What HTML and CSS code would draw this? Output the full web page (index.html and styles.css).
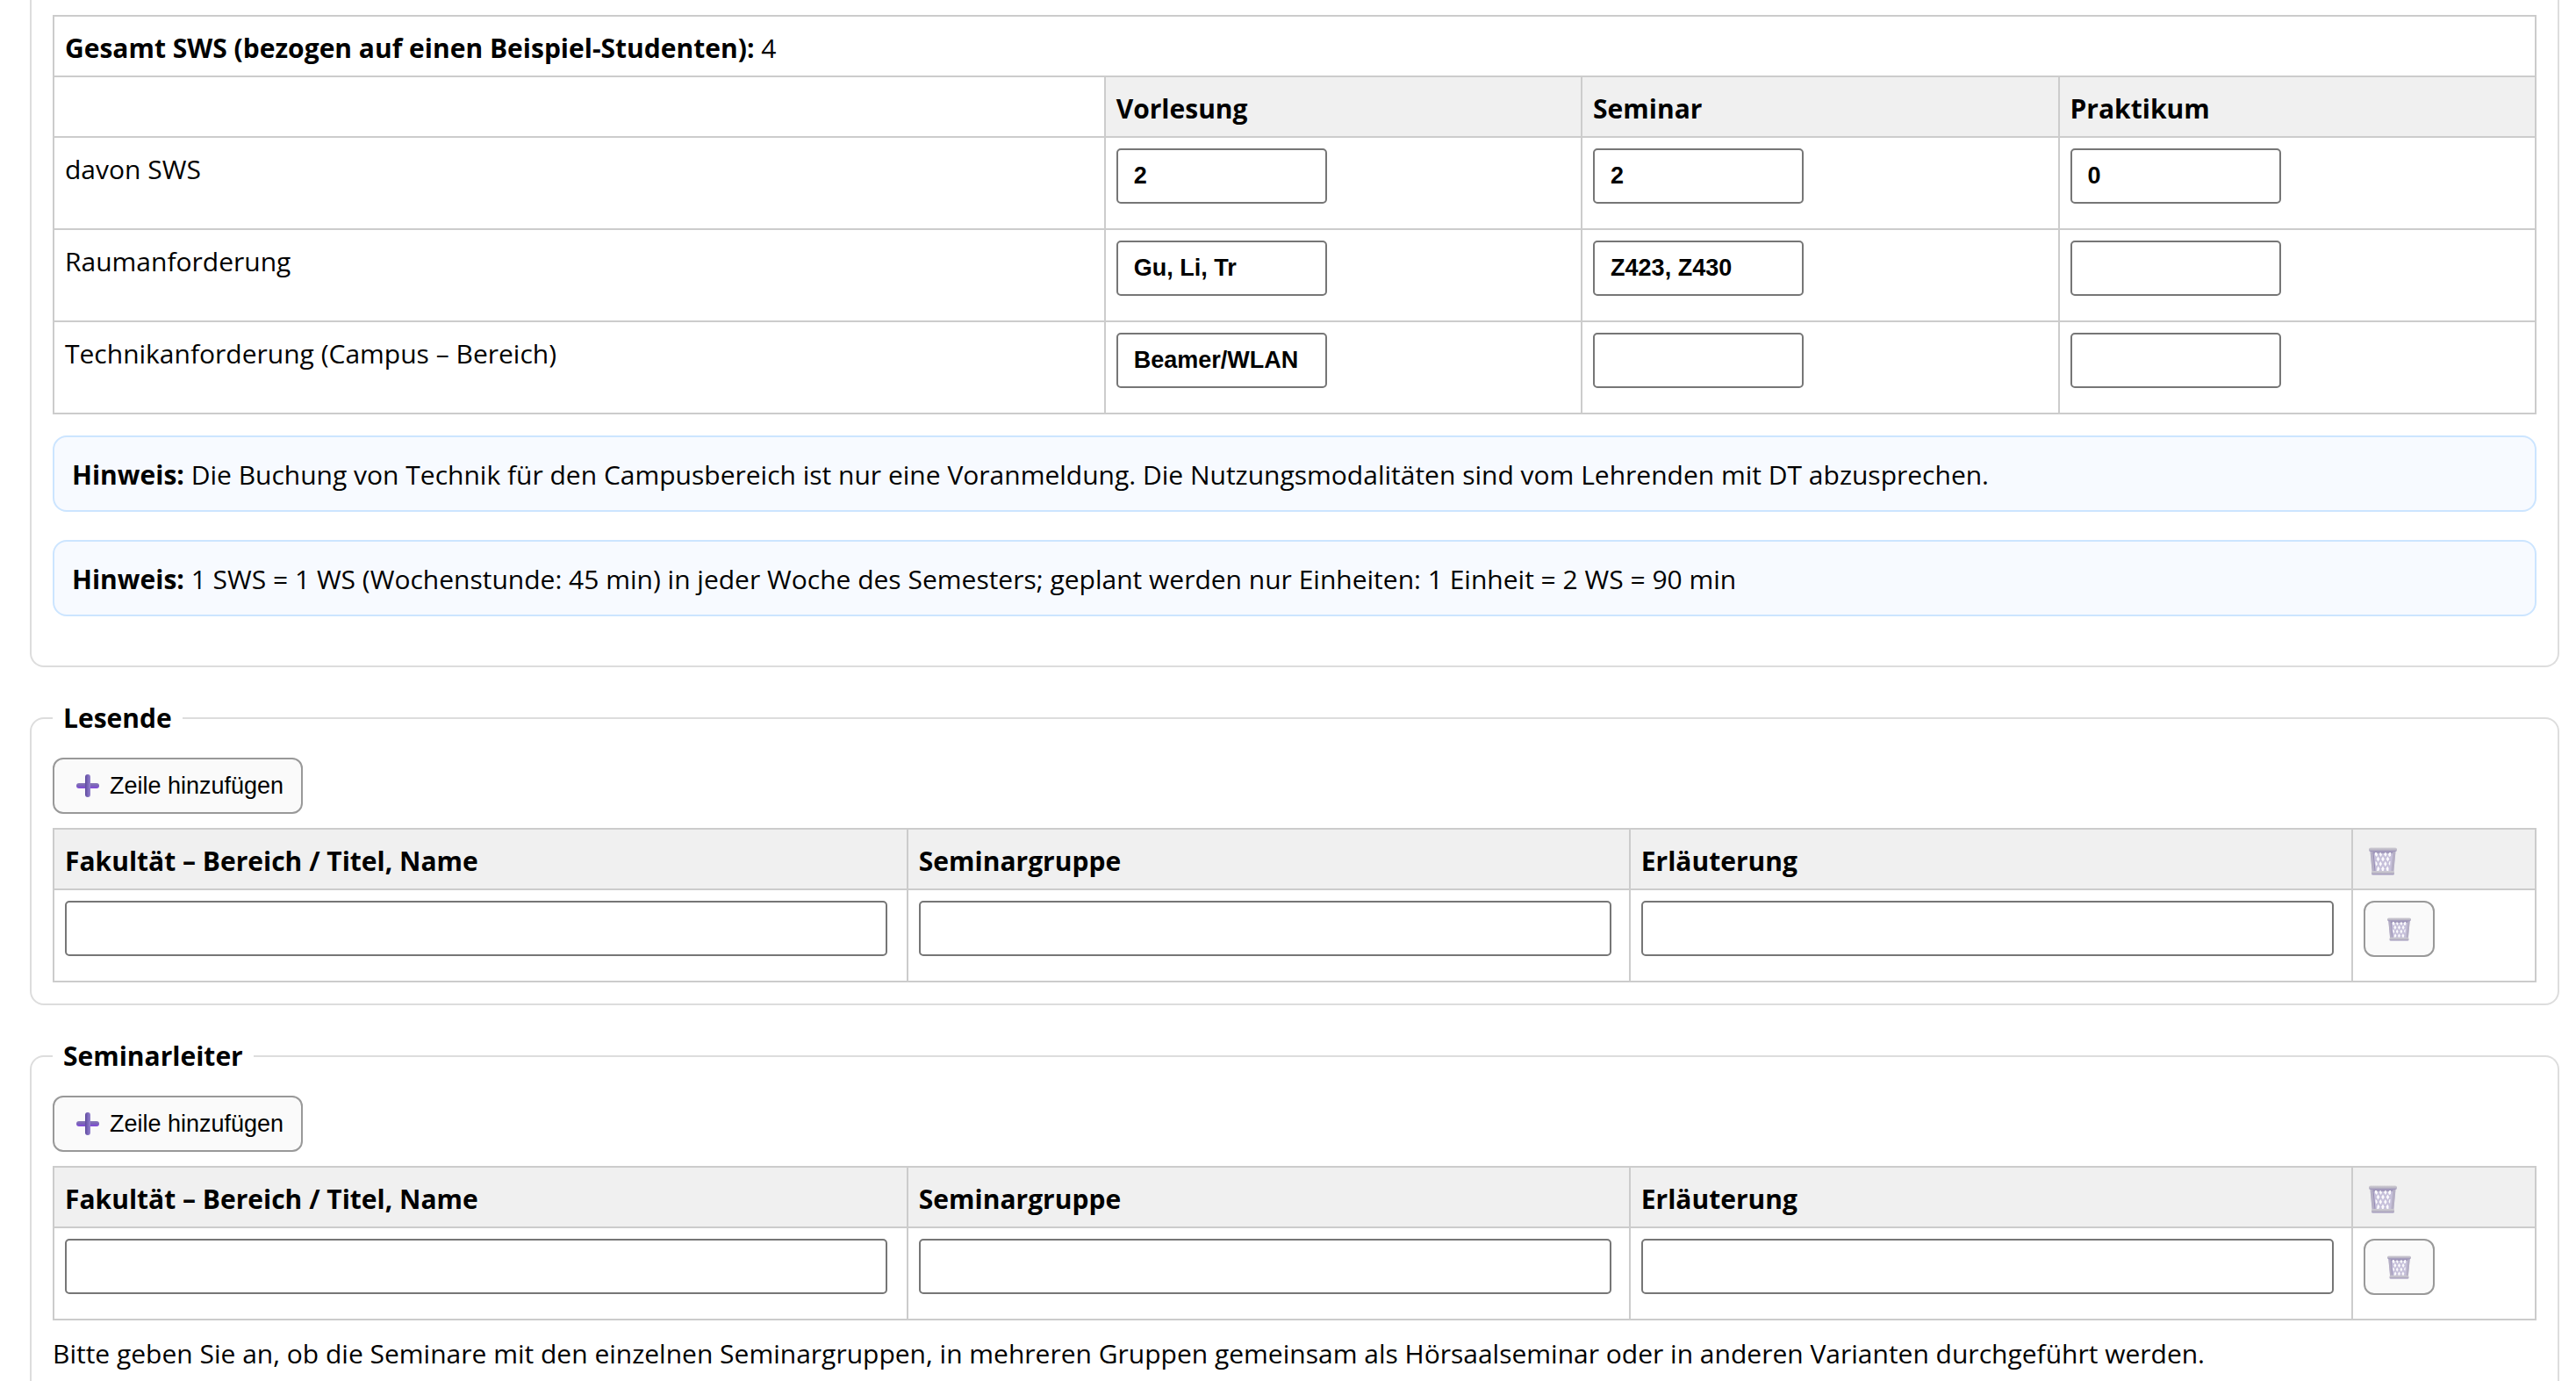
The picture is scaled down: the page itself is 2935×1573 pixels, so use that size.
FILE: index.html
```html
<!DOCTYPE html>
<html lang="de">
<head>
<meta charset="utf-8">
<meta name="viewport" content="width=device-width, initial-scale=1">
<title>Lehrplanung</title>
<link rel="stylesheet" href="styles.css">
</head>
<body>
<svg class="symbols" aria-hidden="true">
  <defs>
    <linearGradient id="plus-h" x1="0" y1="0" x2="0" y2="1">
      <stop offset="0" stop-color="#8a7bb8"/><stop offset="0.5" stop-color="#7a62b8"/><stop offset="1" stop-color="#8447e0"/>
    </linearGradient>
    <linearGradient id="plus-v" x1="0" y1="0" x2="1" y2="0">
      <stop offset="0" stop-color="#5f4a9c"/><stop offset="0.5" stop-color="#7a66ba"/><stop offset="1" stop-color="#9484cc"/>
    </linearGradient>
    <linearGradient id="rim" x1="0" y1="0" x2="0" y2="1">
      <stop offset="0" stop-color="#cfcdd3"/><stop offset="0.6" stop-color="#b9b5c4"/><stop offset="1" stop-color="#978cb8"/>
    </linearGradient>
    <symbol id="icon-plus" viewBox="0 0 26 26">
      <rect x="0" y="10" width="26" height="6" rx="3" fill="url(#plus-h)"/>
      <rect x="10" y="0" width="6" height="26" rx="3" fill="url(#plus-v)"/>
    </symbol>
    <symbol id="icon-trash" viewBox="0 0 32 32">
      <path d="M1.500 3H30.500L28 29H4Z" fill="#c6c0da"/>
      <path d="M2 4H30L29.500 7H2.500Z" fill="#a29abb"/>
      <g fill="#fbfafd">
        <path d="M7 6l2 0 1 2.500-1 2.500-2-2z"/>
        <path d="M13 5.500l2 3-1.500 2.500-1.500-3z"/>
        <path d="M19 5.500l1.500 2.500-1.500 3-2-3z"/>
        <path d="M25 6v4l-2 1-1-3 1.500-2z"/>
        <path d="M10.500 10.500l1.800 3-1.800 3-1.800-3z"/>
        <path d="M16 10.500l1.800 3-1.800 3-1.800-3z"/>
        <path d="M21.500 10.500l1.800 3-1.800 3-1.800-3z"/>
        <path d="M7.500 16l1.500 1 .8 2.500-1.600 2-.7-3z"/>
        <path d="M13.300 16l1.700 3-1.700 3-1.700-3z"/>
        <path d="M18.800 16l1.700 3-1.700 3-1.700-3z"/>
        <path d="M24.500 16l-.5 5-1.500-2 1-3z"/>
        <path d="M10.800 21.500l1.600 3-1.200 2.500h-2l.2-3z"/>
        <path d="M16 21.500l1.600 3-1 2.500h-1.500l-.8-2.500z"/>
        <path d="M21.200 21.500l1.400 2.500-.2 3h-1.900l-.9-2.500z"/>
      </g>
      <path d="M3 5L5.200 28M29 5L26.800 28" fill="none" stroke="#b5afc5" stroke-width="3"/>
      <path d="M5 6L7 27" fill="none" stroke="#978db6" stroke-width="1"/>
      <rect x="0" y="0.500" width="32" height="4.500" rx="2" fill="url(#rim)"/>
      <rect x="3" y="27" width="26" height="4.500" rx="1.500" fill="url(#rim)"/>
    </symbol>
  </defs>
</svg>

<main class="form">
  <section class="group group-first">
    <table class="grid sws">
      <colgroup><col class="col-label"><col><col><col></colgroup>
      <tbody>
        <tr><td class="text" colspan="4"><strong>Gesamt SWS (bezogen auf einen Beispiel-Studenten):</strong> 4</td></tr>
        <tr>
          <td></td>
          <th scope="col" id="c-vl">Vorlesung</th>
          <th scope="col" id="c-sem">Seminar</th>
          <th scope="col" id="c-pr">Praktikum</th>
        </tr>
        <tr>
          <td class="text" id="r-sws">davon SWS</td>
          <td><input class="field short" type="text" value="2" aria-labelledby="r-sws c-vl"></td>
          <td><input class="field short" type="text" value="2" aria-labelledby="r-sws c-sem"></td>
          <td><input class="field short" type="text" value="0" aria-labelledby="r-sws c-pr"></td>
        </tr>
        <tr>
          <td class="text" id="r-raum">Raumanforderung</td>
          <td><input class="field short" type="text" value="Gu, Li, Tr" aria-labelledby="r-raum c-vl"></td>
          <td><input class="field short" type="text" value="Z423, Z430" aria-labelledby="r-raum c-sem"></td>
          <td><input class="field short" type="text" aria-labelledby="r-raum c-pr"></td>
        </tr>
        <tr>
          <td class="text" id="r-tech">Technikanforderung (Campus – Bereich)</td>
          <td><input class="field short" type="text" value="Beamer/WLAN" aria-labelledby="r-tech c-vl"></td>
          <td><input class="field short" type="text" aria-labelledby="r-tech c-sem"></td>
          <td><input class="field short" type="text" aria-labelledby="r-tech c-pr"></td>
        </tr>
      </tbody>
    </table>
    <p class="hint"><strong>Hinweis:</strong> Die Buchung von Technik für den Campusbereich ist nur eine Voranmeldung. Die Nutzungsmodalitäten sind vom Lehrenden mit DT abzusprechen.</p>
    <p class="hint"><strong>Hinweis:</strong> 1 SWS = 1 WS (Wochenstunde: 45 min) in jeder Woche des Semesters; geplant werden nur Einheiten: 1 Einheit = 2 WS = 90 min</p>
  </section>

  <fieldset class="group">
    <legend>Lesende</legend>
    <button class="btn" type="button"><svg class="plus" aria-hidden="true"><use href="#icon-plus"/></svg>Zeile hinzufügen</button>
    <table class="grid people">
      <colgroup><col class="col-name"><col class="col-mid"><col class="col-mid"><col></colgroup>
      <thead>
        <tr>
          <th scope="col" id="l-name">Fakultät – Bereich / Titel, Name</th>
          <th scope="col" id="l-group">Seminargruppe</th>
          <th scope="col" id="l-note">Erläuterung</th>
          <th scope="col" class="icon-head"><svg class="trash" role="img" aria-label="Löschen"><use href="#icon-trash"/></svg></th>
        </tr>
      </thead>
      <tbody>
        <tr>
          <td><input class="field wide" type="text" aria-labelledby="l-name"></td>
          <td><input class="field wide" type="text" aria-labelledby="l-group"></td>
          <td><input class="field wide" type="text" aria-labelledby="l-note"></td>
          <td><button class="btn btn-icon" type="button" aria-label="Zeile löschen"><svg class="trash-small" aria-hidden="true"><use href="#icon-trash"/></svg></button></td>
        </tr>
      </tbody>
    </table>
  </fieldset>

  <fieldset class="group group-last">
    <legend>Seminarleiter</legend>
    <button class="btn" type="button"><svg class="plus" aria-hidden="true"><use href="#icon-plus"/></svg>Zeile hinzufügen</button>
    <table class="grid people">
      <colgroup><col class="col-name"><col class="col-mid"><col class="col-mid"><col></colgroup>
      <thead>
        <tr>
          <th scope="col" id="s-name">Fakultät – Bereich / Titel, Name</th>
          <th scope="col" id="s-group">Seminargruppe</th>
          <th scope="col" id="s-note">Erläuterung</th>
          <th scope="col" class="icon-head"><svg class="trash" role="img" aria-label="Löschen"><use href="#icon-trash"/></svg></th>
        </tr>
      </thead>
      <tbody>
        <tr>
          <td><input class="field wide" type="text" aria-labelledby="s-name"></td>
          <td><input class="field wide" type="text" aria-labelledby="s-group"></td>
          <td><input class="field wide" type="text" aria-labelledby="s-note"></td>
          <td><button class="btn btn-icon" type="button" aria-label="Zeile löschen"><svg class="trash-small" aria-hidden="true"><use href="#icon-trash"/></svg></button></td>
        </tr>
      </tbody>
    </table>
    <p class="note">Bitte geben Sie an, ob die Seminare mit den einzelnen Seminargruppen, in mehreren Gruppen gemeinsam als Hörsaalseminar oder in anderen Varianten durchgeführt werden.</p>
  </fieldset>
</main>
</body>
</html>
```
FILE: styles.css
```css
*, *::before, *::after { box-sizing: border-box; }

body {
  margin: 0;
  background: #fff;
  color: #000;
  font: 30px/43px "Segoe UI", "Open Sans", "Noto Sans", sans-serif;
}

.symbols { display: block; width: 0; height: 0; }

.form {
  display: flex;
  flex-direction: column;
  gap: 36px;
  padding: 0 19px 0 34px;
}

.group {
  min-width: 0;
  margin: 0;
  padding: 24px;
  border: 2px solid #ddd;
  border-radius: 16px;
}

/* The first group runs on from above, the last one runs on below. */
.group-first {
  padding-top: 17px;
  border-top: 0;
  border-top-left-radius: 0;
  border-top-right-radius: 0;
}

.group-last {
  padding-bottom: 10px;
  border-bottom: 0;
  border-bottom-left-radius: 0;
  border-bottom-right-radius: 0;
}

legend { padding: 0 12px; font-weight: bold; }

.grid {
  width: 100%;
  table-layout: fixed;
  border-collapse: collapse;
}

.grid th,
.grid td {
  padding: 12px;
  border: 2px solid #ccc;
  text-align: left;
  vertical-align: top;
}

.grid th { background: #f0f0f0; font-weight: bold; }

.grid th,
.grid .text { padding: 14px 12px 10px; }

.col-label { width: 42.35%; }
.col-name { width: 34.4%; }
.col-mid { width: 29.1%; }

.field {
  display: block;
  height: 63px;
  margin: 0 0 16px;
  padding: 0 18px;
  border: 2px solid #767676;
  border-radius: 5px;
  background: #fff;
  color: #000;
  font: bold 27px "Liberation Sans", Arial, sans-serif;
}

.short { width: 240px; }
.wide { width: 99%; }

.btn {
  display: flex;
  align-items: center;
  gap: 12px;
  height: 64px;
  padding: 0 20px 0 25px;
  border: 2px solid #999;
  border-radius: 12px;
  background: #fafafa;
  color: #000;
  font: 27px "Liberation Sans", Arial, sans-serif;
}

.btn-icon {
  justify-content: center;
  width: 81px;
  padding: 0;
}

.plus { width: 26px; height: 26px; }

.people { margin-top: 16px; }

.icon-head svg {
  display: block;
  width: 32px;
  height: 32px;
  margin: 6px 6px 0;
}

.trash-small { width: 27px; height: 27px; }

.hint {
  margin: 24px 0 32px;
  padding: 21px 20px 19px;
  border: 2px solid #cce5ff;
  border-radius: 16px;
  background: #f7faff;
}

.hint + .hint { margin-top: 0; }

.note { margin: 16px 0 0; }
```
